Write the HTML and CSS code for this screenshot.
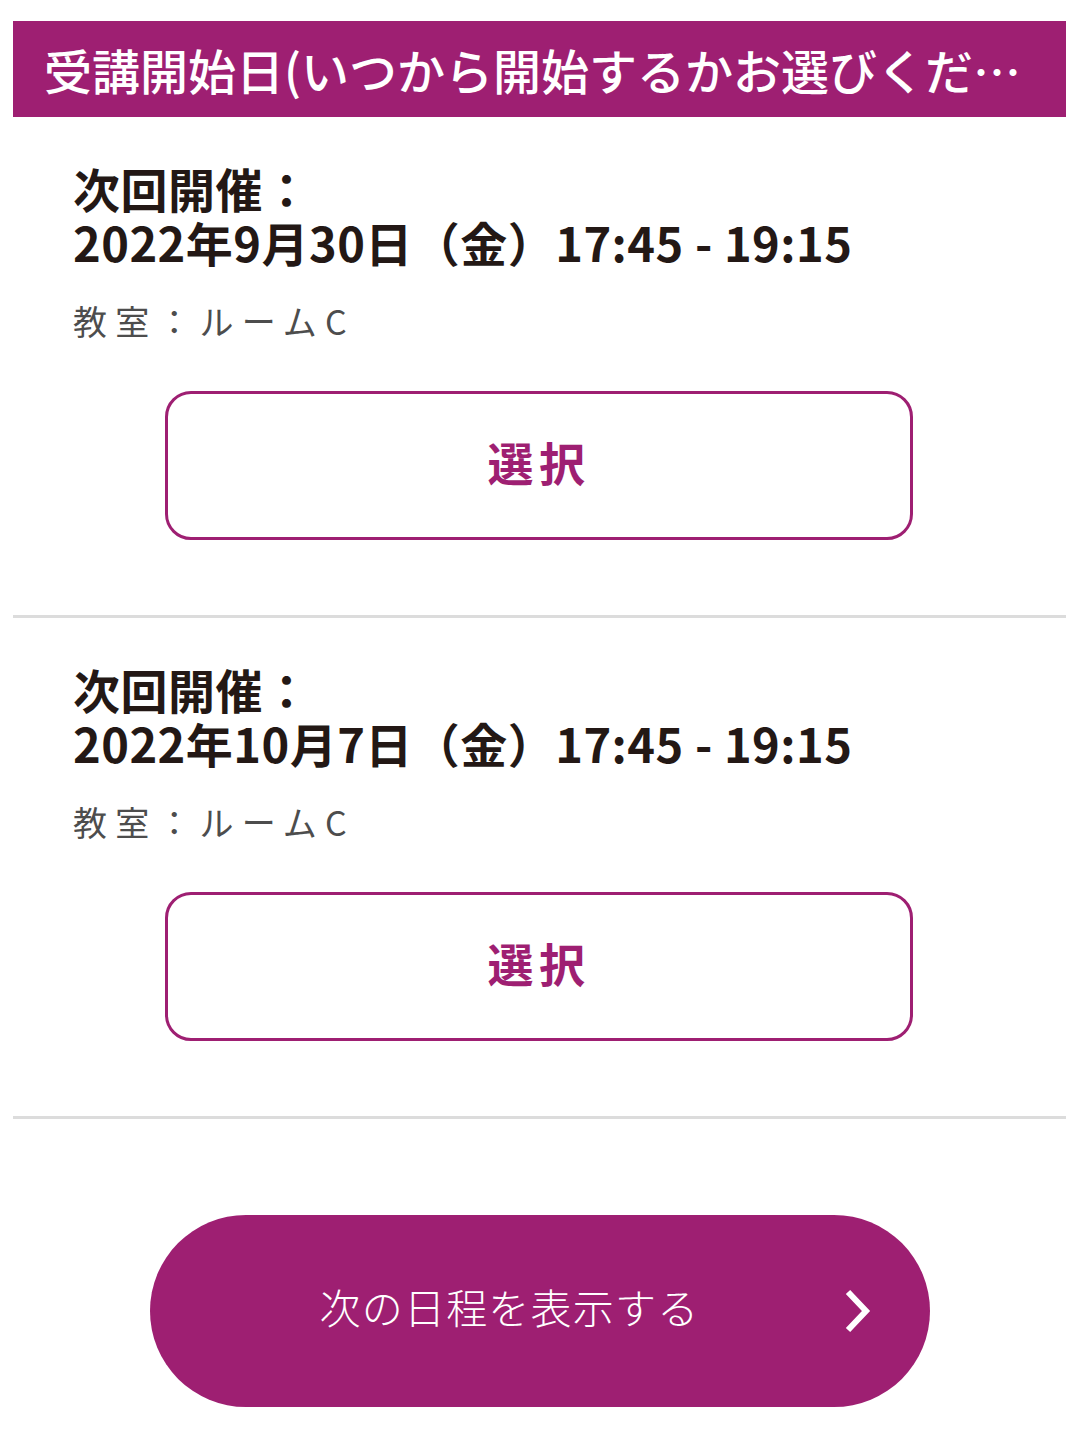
FILE: index.html
```html
<!DOCTYPE html>
<html lang="ja">
<head>
    <meta charset="UTF-8">
    <meta name="viewport" content="width=device-width, initial-scale=1.0">
    <title>受講開始日の選択</title>
    <link rel="stylesheet" href="styles.css">
</head>
<body>
    <div class="page">
        <h2 class="section-title">受講開始日(いつから開始するかお選びください)</h2>

        <div class="session">
            <p class="session-date">次回開催：<br>2022年9月30日（金）17:45 - 19:15</p>
            <p class="session-room">教室：ルームC</p>
            <button class="select-btn" type="button">選択</button>
        </div>

        <div class="session">
            <p class="session-date">次回開催：<br>2022年10月7日（金）17:45 - 19:15</p>
            <p class="session-room">教室：ルームC</p>
            <button class="select-btn" type="button">選択</button>
        </div>

        <div class="more">
            <button class="more-btn" type="button">
                <span>次の日程を表示する</span>
                <svg class="more-arrow" width="28" height="44" viewBox="0 0 28 44">
                    <path d="M4 3 L22 22 L4 41" fill="none" stroke="#fff" stroke-width="6"/>
                </svg>
            </button>
        </div>
    </div>
</body>
</html>
```

FILE: styles.css
```css
body {
    font-family: "Noto Sans CJK JP", "Noto Sans", sans-serif;
    background-color: #fff;
    margin: 0;
}
.page {
    padding: 21px 16px 40px 13px;
}
.section-title {
    margin: 0;
    height: 96px;
    line-height: 96px;
    padding: 0 20px 0 31px;
    background: #9e1f72;
    color: #fff;
    font-size: 48px;
    font-weight: 500;
    white-space: nowrap;
    overflow: hidden;
    text-overflow: ellipsis;
}
.session {
    padding: 44px 0 75px 60px;
    border-bottom: 3px solid #dcdcdc;
}
.session-date {
    margin: 0;
    font-size: 47px;
    font-weight: 700;
    line-height: 54px;
    letter-spacing: 0.01em;
    color: #231815;
}
.session-room {
    margin: 27px 0 0;
    font-size: 34px;
    line-height: 50px;
    letter-spacing: 0.24em;
    color: #4d4d4d;
}
.select-btn {
    display: block;
    width: 748px;
    height: 149px;
    margin: 45px 0 0 92px;
    background: #fff;
    border: 3px solid #9e1f72;
    border-radius: 26px;
    color: #9e1f72;
    font-family: inherit;
    font-size: 46px;
    font-weight: 700;
    letter-spacing: 0.12em;
    padding: 0 0 10px;
}
.more {
    padding-top: 96px;
    display: flex;
    justify-content: center;
}
.more-btn {
    position: relative;
    width: 780px;
    height: 192px;
    border: none;
    border-radius: 96px;
    background: #9e1f72;
    color: #fff;
    font-family: inherit;
    font-size: 41px;
    font-weight: 300;
    letter-spacing: 0.03em;
    padding: 0 60px 10px 0;
}
.more-arrow {
    position: absolute;
    right: 58px;
    top: 74px;
}
```
